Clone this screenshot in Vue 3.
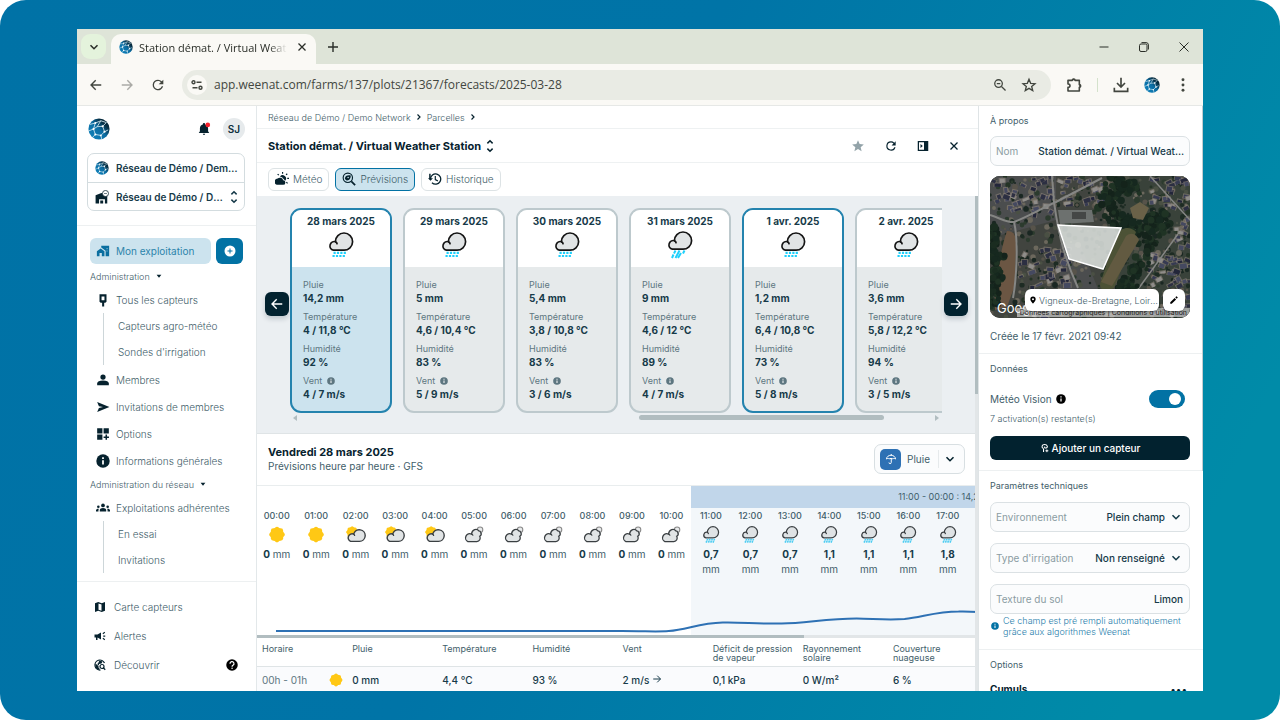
<template>
    <div class="backdrop">
        <!-- shared icon shapes -->
        <svg class="sprite" aria-hidden="true">
            <defs>
                <linearGradient id="globe-fill" x1="0" y1="1" x2="1" y2="0">
                    <stop offset="0" stop-color="#0f86c0" />
                    <stop offset="0.5" stop-color="#0b6da3" />
                    <stop offset="0.75" stop-color="#052c40" />
                    <stop offset="1" stop-color="#03202e" />
                </linearGradient>
            </defs>
            <symbol id="globe" viewBox="0 0 24 24">
                <circle cx="12" cy="12" r="11.5" fill="url(#globe-fill)" />
                <g fill="none" stroke="#d5ebf4" stroke-width="0.9">
                    <path d="M2 7 8 5.5 14 3 20 5M8 5.5 6 12 10 9.5 14 3M10 9.5 16 9 20 5M16 9 18 15 22 13M6 12 8 18 14 19 18 15M6 12 1 14M8 18 5 21M14 19 15 23" />
                </g>
                <g fill="#fff">
                    <circle cx="8" cy="5.5" r="1.1" />
                    <circle cx="6" cy="12" r="1.2" />
                    <circle cx="16" cy="9" r="1.2" />
                    <circle cx="18" cy="15" r="1.2" />
                    <circle cx="8" cy="18" r="1.1" />
                    <circle cx="14" cy="19" r="1" />
                </g>
            </symbol>
            <symbol id="chevron" viewBox="0 0 16 16">
                <path d="m4 6 4 4 4-4" fill="none" stroke="currentColor" stroke-width="1.8" />
            </symbol>
            <symbol id="chevron-right" viewBox="0 0 16 16">
                <path d="m5 3 5 5-5 5" fill="none" stroke="currentColor" stroke-width="2.4" />
            </symbol>
            <symbol id="sorter" viewBox="3 0 10 16">
                <path d="m5 5 3-3 3 3M5 11l3 3 3-3" fill="none" stroke="currentColor" stroke-width="1.7" />
            </symbol>
            <symbol id="caret" viewBox="0 0 10 10">
                <path d="M1 3h8L5 8z" fill="currentColor" />
            </symbol>
            <symbol id="arrow-left" viewBox="0 0 24 24">
                <path d="M21 12H4m7.5-8L3.5 12l8 8" fill="none" stroke="currentColor" stroke-width="2.4" />
            </symbol>
            <symbol id="arrow-right" viewBox="0 0 24 24">
                <path d="M3 12h17m-7.5-8 8 8-8 8" fill="none" stroke="currentColor" stroke-width="2.4" />
            </symbol>
            <symbol id="reload" viewBox="0 0 24 24">
                <path d="M17.65 6.35A7.96 7.96 0 0 0 12 4a8 8 0 1 0 7.73 10h-2.08A6 6 0 1 1 12 6c1.66 0 3.14.69 4.22 1.78L13 11h7V4z" fill="currentColor" />
            </symbol>
            <symbol id="cross" viewBox="0 0 24 24">
                <path d="m5 5 14 14M19 5 5 19" fill="none" stroke="currentColor" stroke-width="2.6" />
            </symbol>
            <symbol id="star-line" viewBox="0 0 24 24">
                <path d="m12 3.500 2.500 6 6.500.5-5 4.200 1.600 6.300L12 17.100l-5.600 3.400L8 14.200 3 10l6.500-.5z" fill="none" stroke="currentColor" stroke-width="2" />
            </symbol>
            <symbol id="star" viewBox="0 0 24 24">
                <path d="M12 17.270 18.180 21l-1.640-7.030L22 9.240l-7.190-.61L12 2 9.190 8.630 2 9.240l5.460 4.730L5.820 21z" fill="currentColor" />
            </symbol>
            <symbol id="zoom-out" viewBox="0 0 24 24">
                <g fill="none" stroke="currentColor" stroke-width="2.2">
                    <circle cx="9.5" cy="9.5" r="6.5" />
                    <path d="m14.5 14.5 7 7M6.5 9.5h6" />
                </g>
            </symbol>
            <symbol id="puzzle" viewBox="0 0 24 24">
                <path d="M3 5h6.500a2 2 0 0 1 4 0H20v6.500a2 2 0 0 1 0 4V21H3v-5.500c4 0 4-5 0-5z" fill="none" stroke="currentColor" stroke-width="2.4" stroke-linejoin="round" />
                <path d="M9.500 5a2.200 2.200 0 0 1 4.400 0zM20 11a2.200 2.200 0 0 1 0 4.400z" fill="currentColor" />
            </symbol>
            <symbol id="download" viewBox="0 0 24 24">
                <path d="M12 1v14m-6-6 6 6 6-6M2 16v5.500h20V16" fill="none" stroke="currentColor" stroke-width="2.5" />
            </symbol>
            <symbol id="dots-v" viewBox="0 0 24 24">
                <g fill="currentColor">
                    <circle cx="12" cy="4" r="2.2" />
                    <circle cx="12" cy="12" r="2.2" />
                    <circle cx="12" cy="20" r="2.2" />
                </g>
            </symbol>
            <symbol id="tune" viewBox="0 0 24 24">
                <g fill="none" stroke="currentColor" stroke-width="2.8">
                    <circle cx="5" cy="6.5" r="3" />
                    <path d="M11 6.500h10M3 17.500h10" />
                    <circle cx="19" cy="17.5" r="3" />
                </g>
            </symbol>
            <symbol id="bell" viewBox="0 0 24 24">
                <path d="M12 22a2 2 0 0 0 2-2h-4a2 2 0 0 0 2 2zm7-6v-5.500c0-3.100-2-5.600-5-6.300V3.500a2 2 0 0 0-4 0v.7c-3 .7-5 3.200-5 6.300V16l-2 3h18z" fill="#06222e" />
                <circle cx="18.5" cy="5" r="4" fill="#f5222d" />
            </symbol>
            <symbol id="barn" viewBox="0 0 24 24">
                <path d="M1 23V9l10-4 10 4v14h-4v-7H7v7zM9 18h5v5H9z" fill="#06222e" />
                <circle cx="18" cy="6" r="5.2" fill="#fff" stroke="#06222e" stroke-width="1.3" />
                <path d="M15.500 6h5" stroke="#06222e" />
            </symbol>
            <symbol id="home-work" viewBox="0 0 24 24">
                <path d="M1.500 12.500 8 7.500l6.500 5V21H10v-5.500H6V21H1.500z" fill="currentColor" />
                <path d="M9 3h13.500v18H16.500v-9.500L9 5.800z" fill="currentColor" />
                <path d="M18 7h2v2h-2zM18 11h2v2h-2z" fill="#7fb5d0" />
            </symbol>
            <symbol id="plus-circle" viewBox="0 0 24 24">
                <path d="M12 1a11 11 0 1 0 0 22 11 11 0 0 0 0-22zm5 12h-4v4h-2v-4H7v-2h4V7h2v4h4z" fill="currentColor" />
            </symbol>
            <symbol id="sensor" viewBox="0 0 24 24">
                <path d="M6 2h12v13l-2 1.500h-2V23h-3.500v-6.500H8L6 15zm3.500 4v6.500h5V6z" fill="currentColor" fill-rule="evenodd" />
            </symbol>
            <symbol id="person" viewBox="0 0 24 24">
                <circle cx="12" cy="7" r="4.5" fill="currentColor" />
                <path d="M2 21v-3c0-3 4-5 10-5s10 2 10 5v3z" fill="currentColor" />
            </symbol>
            <symbol id="send" viewBox="0 0 24 24">
                <path d="M2 3.500 23 12 2 20.500l3-7 7-1.500-7-1.500z" fill="currentColor" />
            </symbol>
            <symbol id="widgets" viewBox="0 0 24 24">
                <path d="M2 2h9v9H2zm11 0h9v9h-9zM2 13h9v9H2zm14.300 0h2.600v3.200h3.300v2.600h-3.300V22h-2.600v-3.200H13v-2.600h3.300z" fill="currentColor" />
            </symbol>
            <symbol id="info" viewBox="0 0 24 24">
                <circle cx="12" cy="12" r="11.5" fill="currentColor" />
                <path d="M10.500 10.500h3V18h-3zM10.500 5.500h3v3h-3z" fill="#fff" />
            </symbol>
            <symbol id="groups" viewBox="0 0 24 24">
                <g fill="currentColor">
                    <circle cx="12" cy="7.5" r="3.2" />
                    <circle cx="4" cy="10" r="2.2" />
                    <circle cx="20" cy="10" r="2.2" />
                    <path d="M6.500 18v-2.500c0-2 2.500-3.500 5.500-3.500s5.500 1.500 5.500 3.500V18zM0 18v-2c0-1.800 2-3 5-2.800-.5.700-.8 1.500-.8 2.300V18zM24 18v-2c0-1.800-2-3-5-2.800.5.700.8 1.500.8 2.300V18z" />
                </g>
            </symbol>
            <symbol id="map" viewBox="0 0 24 24">
                <path d="M2 4.500 8.500 2l7 2.500L22 2v17.500L15.500 22l-7-2.500L2 22zM9 5v12.500l6 2V7z" fill="currentColor" fill-rule="evenodd" />
            </symbol>
            <symbol id="megaphone" viewBox="0 0 24 24">
                <path d="M1 9h6l7-4v14l-7-4v5H4v-5H1zM18.500 11h4v2.500h-4zM17 6.500l4-3 1.300 1.800-4 3zM18.300 15.700l4 3-1.300 1.800-4-3z" fill="currentColor" />
            </symbol>
            <symbol id="discover" viewBox="0 0 24 24">
                <path d="M21 8A10 10 0 1 0 13 22" fill="none" stroke="currentColor" stroke-width="2.4" />
                <path d="M3 9l6 5v3l2 2v3C5 22 2 16 3 9zM11 3l6 2-2 4-5 1v3l-4-3 2-1z" fill="currentColor" />
                <circle cx="16" cy="15" r="4" fill="#fff" stroke="currentColor" stroke-width="2.4" />
                <path d="m18.500 17.500 4 4" stroke="currentColor" stroke-width="2.6" />
            </symbol>
            <symbol id="help" viewBox="0 0 24 24">
                <circle cx="12" cy="12" r="11.5" fill="#000" />
                <path d="M8 9.500a4 4 0 1 1 6 3.200c-1.300.8-1.900 1.300-1.900 2.800" fill="none" stroke="#fff" stroke-width="2.4" />
                <circle cx="12.1" cy="18.5" r="1.5" fill="#fff" />
            </symbol>
            <symbol id="sun-cloud" viewBox="0 0 24 24">
                <path d="M3 22h10.500a4 4 0 0 0 .5-8 6 6 0 0 0-9.500-3A5.700 5.700 0 0 0 3 22z" fill="currentColor" />
                <path d="M8.500 7.500a5 5 0 1 1 9 7.500 6.500 6.500 0 0 0-2.500-2.500A8 8 0 0 0 8.500 7.500z" fill="currentColor" />
                <path d="M13 0v3M21 3l-2 2M24 11h-3M21.500 19.500l-2-2M4.500 3.500l2 2" stroke="currentColor" stroke-width="2" />
            </symbol>
            <symbol id="forecast" viewBox="0 0 24 24">
                <circle cx="10" cy="10" r="8" fill="none" stroke="currentColor" stroke-width="2" />
                <path d="m16 16 6.500 6.500" stroke="currentColor" stroke-width="3" />
                <path d="M5 12c0-6 5-7 10-6 0 5-2 9-7 8.500L5 12z" fill="currentColor" />
                <circle cx="10.5" cy="9.5" r="1.3" fill="#cce3ee" />
            </symbol>
            <symbol id="history" viewBox="0 0 24 24">
                <path d="M4.200 12a8.800 8.800 0 1 1 2.600 6.300" fill="none" stroke="currentColor" stroke-width="2.2" />
                <path d="M0 10.500h8.500L4.300 15zM2 3h2.500v8H2z" fill="currentColor" />
                <path d="M12.500 7v6l4.500 2.500" fill="none" stroke="currentColor" stroke-width="2" />
            </symbol>
            <symbol id="side-panel" viewBox="0 0 24 24">
                <path d="M1.500 2h21v20h-21zM4 4.500v15h10v-15zM7 8l4.500 4L7 16z" fill="currentColor" fill-rule="evenodd" />
            </symbol>
            <symbol id="umbrella" viewBox="0 0 24 24">
                <path d="M3 12a9 7.500 0 0 1 18 0c-2-1.500-4-1.500-5 0-1.500-1.500-6.500-1.500-8 0-1-1.500-3-1.500-5 0zM12.500 2v2.500M12.500 11v8a2.300 2.300 0 0 1-4.600 0" fill="none" stroke="currentColor" stroke-width="2" />
            </symbol>
            <symbol id="pin" viewBox="0 0 24 24">
                <path d="M12 1.500a8 8 0 0 0-8 8C4 15 12 22.500 12 22.500S20 15 20 9.500a8 8 0 0 0-8-8zm0 5a3 3 0 1 1 0 6 3 3 0 0 1 0-6z" fill="currentColor" />
            </symbol>
            <symbol id="pencil" viewBox="0 0 24 24">
                <path d="M3 17.500V21h3.500L17 10.500 13.500 7zM20.700 6.800a1 1 0 0 0 0-1.400l-2-2a1 1 0 0 0-1.500 0L15 5.500 18.500 9z" fill="currentColor" />
            </symbol>
            <symbol id="probe" viewBox="0 0 24 24">
                <path d="M8 13C3 11 4 3.500 11 3.500s9 7.500 3.500 8.500c-3 .5-4-1.500-3.500-3.500M8.500 13v8.500" fill="none" stroke="currentColor" stroke-width="2.6" />
                <path d="M16.500 15.500v6.500M13 18.700h7" stroke="currentColor" stroke-width="2.4" />
            </symbol>
            <symbol id="rain" viewBox="0 0 26 26">
                <path d="M5.300 18.200h10.500A8.600 8.600 0 1 0 7.400 9.700a4.300 4.300 0 0 0-2.100 8.500z" fill="#e1e4e5" stroke="currentColor" stroke-width="1.7" />
                <path d="M7.200 9.600c1.300.4 1.900 1.300 2 2.800" fill="none" stroke="currentColor" stroke-width="1.7" />
                <path d="M5.500 20.900h13" stroke="#1fd0fb" stroke-width="2.2" stroke-dasharray="2.2 1.2" />
                <path d="M4.500 24h12.500" stroke="#1fd0fb" stroke-width="2.2" stroke-dasharray="2.2 1.2" />
            </symbol>
            <symbol id="rain-soft" viewBox="0 0 26 26">
                <path d="M5.300 18.200h10.500A8.600 8.600 0 1 0 7.400 9.700a4.300 4.300 0 0 0-2.100 8.500z" fill="#dfe3e5" stroke="currentColor" stroke-width="1.9" />
                <path d="M7.200 9.600c1.300.4 1.900 1.300 2 2.800" fill="none" stroke="currentColor" stroke-width="1.7" />
                <path d="m8 19.500-2.500 6m6-6-2.500 6m6-6-2.500 6m6-6-2.500 6" stroke="#4fcdf2" stroke-width="2.4" stroke-dasharray="2.8 0.8" />
            </symbol>
            <symbol id="showers" viewBox="0 0 26 28">
                <path d="M5.300 18.200h10.500A8.600 8.600 0 1 0 7.400 9.700a4.300 4.300 0 0 0-2.100 8.500z" fill="#e1e4e5" stroke="currentColor" stroke-width="1.7" />
                <path d="M7.200 9.600c1.300.4 1.900 1.300 2 2.800" fill="none" stroke="currentColor" stroke-width="1.7" />
                <path d="m8.500 19.500-1.500 3m5.500-3L8.500 27M6.500 23.500 5 27m12.500-7.500-1.500 3m-2-.5-3 5" stroke="#1fd0fb" stroke-width="2" />
            </symbol>
            <symbol id="sun" viewBox="0 0 24 24">
                <g fill="#ffc815">
                    <rect x="3.3" y="3.3" width="17.4" height="17.4" rx="3.5" />
                    <rect x="3.3" y="3.3" width="17.4" height="17.4" rx="3.5" transform="rotate(45 12 12)" />
                </g>
            </symbol>
            <symbol id="partly" viewBox="0 2 26 22">
                <g fill="#ffc815">
                    <rect x="2" y="4" width="12" height="12" rx="2" />
                    <rect x="2" y="4" width="12" height="12" rx="2" transform="rotate(45 8 10)" />
                </g>
                <path d="M6 22h11.500a7.600 7.600 0 1 0-7.500-9.500A4.900 4.900 0 1 0 6 22z" fill="#e1e4e5" stroke="currentColor" stroke-width="1.8" />
                <path d="M9.500 12.500c1.200.3 1.800 1.200 1.800 2.300" fill="none" stroke="currentColor" stroke-width="1.6" />
            </symbol>
            <symbol id="cloudy" viewBox="0 2 28 23">
                <circle cx="22.5" cy="6.8" r="3.8" fill="#e8eaeb" stroke="#888" stroke-width="1.5" />
                <path d="M5.500 23.500H18a5 5 0 0 0 4-7.500c2-1 2.500-3.500 1.500-5.500-.5-1.200-1.500-1.800-2.800-2-2.500-3.800-9.500-2.500-10.200 4.500a5.300 5.300 0 0 0-5 10.500z" fill="#e1e4e5" stroke="currentColor" stroke-width="1.8" />
                <path d="M10.500 13c1.200.2 2 1 2 2.200" fill="none" stroke="currentColor" stroke-width="1.6" />
            </symbol>
        </svg>

        <div class="window">
            <div class="tab-strip">
                <button class="tab-search" aria-label="Rechercher des onglets">
                    <svg class="i14"><use href="#chevron" /></svg>
                </button>
                <div class="browser-tab">
                    <svg class="i14"><use href="#globe" /></svg>
                    <span class="tab-title">Station démat. / Virtual Weather Station</span>
                    <button aria-label="Fermer l'onglet"><svg class="i12"><use href="#cross" /></svg></button>
                </div>
                <button class="new-tab" aria-label="Nouvel onglet">
                    <svg class="i10" viewBox="0 0 10 10"><path d="M5 0v10M0 5h10" stroke="currentColor" stroke-width="1.4" /></svg>
                </button>
                <div class="window-controls">
                    <button aria-label="Réduire"><svg class="i10" viewBox="0 0 10 10"><path d="M.5 5h9" stroke="currentColor" /></svg></button>
                    <button aria-label="Restaurer">
                        <svg class="i10" viewBox="0 0 10 10" fill="none" stroke="currentColor">
                            <rect x=".5" y="2" width="7.5" height="7.5" rx="1.5" />
                            <path d="M2.500.6H7A2.400 2.400 0 0 1 9.400 3v4.500" />
                        </svg>
                    </button>
                    <button aria-label="Fermer"><svg class="i10" viewBox="0 0 10 10"><path d="m.5.5 9 9m0-9-9 9" stroke="currentColor" /></svg></button>
                </div>
            </div>

            <div class="toolbar">
                <button class="tool" aria-label="Retour"><svg class="i14"><use href="#arrow-left" /></svg></button>
                <button class="tool faded" aria-label="Avancer"><svg class="i14"><use href="#arrow-right" /></svg></button>
                <button class="tool" aria-label="Actualiser"><svg class="i16"><use href="#reload" /></svg></button>
                <div class="address">
                    <span class="site-info"><svg class="i12"><use href="#tune" /></svg></span>
                    <input v-model="address" type="text" aria-label="Adresse" />
                    <button aria-label="Zoom"><svg class="i14"><use href="#zoom-out" /></svg></button>
                    <button aria-label="Favori"><svg class="i16"><use href="#star-line" /></svg></button>
                </div>
                <button aria-label="Extensions"><svg class="i16"><use href="#puzzle" /></svg></button>
                <span class="tool-sep"></span>
                <button aria-label="Téléchargements"><svg class="i16"><use href="#download" /></svg></button>
                <button aria-label="Profil"><svg class="i16"><use href="#globe" /></svg></button>
                <button aria-label="Menu"><svg class="i16"><use href="#dots-v" /></svg></button>
            </div>

            <div class="app">
                <aside class="sidebar">
                    <div class="side-top">
                        <div class="brand-row">
                            <svg class="i22"><use href="#globe" /></svg>
                            <button class="bell" aria-label="Notifications"><svg class="i14"><use href="#bell" /></svg></button>
                            <span class="avatar">SJ</span>
                        </div>
                        <div class="farm-picker">
                            <button>
                                <svg class="i14"><use href="#globe" /></svg>
                                <span>Réseau de Démo / Demo Network</span>
                            </button>
                            <button>
                                <svg class="i14"><use href="#barn" /></svg>
                                <span>Réseau de Démo / Demo Network</span>
                                <svg class="sort-icon"><use href="#sorter" /></svg>
                            </button>
                        </div>
                    </div>

                    <nav class="side-nav">
                        <div class="farm-row">
                            <a class="farm-link" href="#"><svg class="i14"><use href="#home-work" /></svg>Mon exploitation</a>
                            <button class="farm-add" aria-label="Ajouter"><svg class="i12"><use href="#plus-circle" /></svg></button>
                        </div>
                        <template v-for="group in navGroups" :key="group.label">
                            <button class="group-label">{{ group.label }}<svg class="i6"><use href="#caret" /></svg></button>
                            <template v-for="item in group.items" :key="item.label">
                                <a class="nav-item" href="#">
                                    <svg class="i14"><use :href="'#' + item.icon" /></svg>{{ item.label }}
                                </a>
                                <div v-if="item.children" class="sub-nav">
                                    <a v-for="child in item.children" :key="child" href="#">{{ child }}</a>
                                </div>
                            </template>
                        </template>
                    </nav>

                    <div class="side-bottom">
                        <a href="#"><svg class="i12"><use href="#map" /></svg>Carte capteurs</a>
                        <a href="#"><svg class="i12"><use href="#megaphone" /></svg>Alertes</a>
                        <a href="#"><svg class="i12"><use href="#discover" /></svg>Découvrir<svg class="i12 help"><use href="#help" /></svg></a>
                    </div>
                </aside>

                <main class="content">
                    <div class="breadcrumb">
                        <a href="#">Réseau de Démo / Demo Network</a>
                        <svg class="i8"><use href="#chevron-right" /></svg>
                        <a href="#">Parcelles</a>
                        <svg class="i8"><use href="#chevron-right" /></svg>
                    </div>
                    <div class="title-row">
                        <h1>Station démat. / Virtual Weather Station</h1>
                        <svg class="sort-icon"><use href="#sorter" /></svg>
                        <div class="title-actions">
                            <button class="muted" aria-label="Favori"><svg class="i14"><use href="#star" /></svg></button>
                            <button aria-label="Actualiser"><svg class="i14"><use href="#reload" /></svg></button>
                            <button aria-label="Panneau"><svg class="i12"><use href="#side-panel" /></svg></button>
                            <button aria-label="Fermer"><svg class="i12"><use href="#cross" /></svg></button>
                        </div>
                    </div>
                    <div class="view-tabs">
                        <button v-for="tab in tabs"
                                :key="tab.label"
                                :class="{ active: tab.label === activeTab }"
                                @click="activeTab = tab.label">
                            <svg class="i14"><use :href="'#' + tab.icon" /></svg>{{ tab.label }}
                        </button>
                    </div>

                    <section class="scroll-body">
                        <div class="carousel">
                            <button class="slide-btn" aria-label="Précédent"><svg class="i14"><use href="#arrow-left" /></svg></button>
                            <div class="carousel-view">
                                <div class="cards">
                                    <article v-for="(day, i) in days"
                                             :key="day.date"
                                             class="day-card"
                                             :class="{ selected: i === selectedDay, outlined: day.outlined }"
                                             @click="selectedDay = i">
                                        <header>
                                            <h2>{{ day.date }}</h2>
                                            <svg class="day-icon"><use :href="'#' + day.icon" /></svg>
                                        </header>
                                        <dl>
                                            <dt>Pluie</dt>
                                            <dd>{{ day.rain }} mm</dd>
                                            <dt>Température</dt>
                                            <dd>{{ day.temp }} °C</dd>
                                            <dt>Humidité</dt>
                                            <dd>{{ day.humidity }} %</dd>
                                            <dt>Vent <svg class="i8"><use href="#info" /></svg></dt>
                                            <dd>{{ day.wind }} m/s</dd>
                                        </dl>
                                    </article>
                                </div>
                                <div class="h-scroll">
                                    <span class="arrow-l"></span>
                                    <span class="thumb"></span>
                                    <span class="arrow-r"></span>
                                </div>
                            </div>
                            <button class="slide-btn next" aria-label="Suivant"><svg class="i14"><use href="#arrow-right" /></svg></button>
                        </div>

                        <div class="day-head">
                            <div>
                                <h2>Vendredi 28 mars 2025</h2>
                                <p>Prévisions heure par heure · GFS</p>
                            </div>
                            <button class="metric">
                                <span class="metric-icon"><svg class="i12"><use href="#umbrella" /></svg></span>
                                Pluie
                                <span class="metric-arrow"><svg class="i14"><use href="#chevron" /></svg></span>
                            </button>
                        </div>

                        <div class="hours-view">
                            <div class="hours">
                                <div class="rain-band">11:00 - 00:00 : 14,2 mm</div>
                                <div class="hour-grid">
                                    <div v-for="hour in hours" :key="hour.time" class="hour">
                                        <span class="hour-time">{{ hour.time }}</span>
                                        <svg class="hour-icon"><use :href="'#' + hour.icon" /></svg>
                                        <span class="hour-value"><b>{{ hour.value }}</b> mm</span>
                                    </div>
                                </div>
                                <svg class="curve" viewBox="0 0 948 30" preserveAspectRatio="none">
                                    <path d="M19 26H365C390 26 400 27 412 26C430 25 442 18 466 17.500C485 17 500 19 525 18.500C550 18 570 13.500 600 13.500C615 13.500 630 15.500 648 14C666 12 680 6.500 702 6.500C720 6 740 8 760 10C790 13 820 16 850 18C880 20 910 22 930 22" />
                                </svg>
                            </div>
                            <div class="hours-scroll"><span></span></div>
                        </div>

                        <table class="hour-table">
                            <thead>
                                <tr>
                                    <th v-for="col in columns" :key="col">{{ col }}</th>
                                </tr>
                            </thead>
                            <tbody>
                                <tr>
                                    <td class="slot"><div>00h - 01h<svg class="i14"><use href="#sun" /></svg></div></td>
                                    <td>0 mm</td>
                                    <td>4,4 °C</td>
                                    <td>93 %</td>
                                    <td>2 m/s <svg class="i10"><use href="#arrow-right" /></svg></td>
                                    <td>0,1 kPa</td>
                                    <td>0 W/m²</td>
                                    <td>6 %</td>
                                </tr>
                            </tbody>
                        </table>
                        <div class="v-scroll"><span></span></div>
                    </section>
                </main>

                <aside class="details">
                    <section class="about">
                        <h3>À propos</h3>
                        <label class="field">
                            <span>Nom</span>
                            <input v-model="stationName" type="text" />
                        </label>
                        <div class="map">
                            <svg class="map-image" viewBox="0 0 200 142" preserveAspectRatio="xMidYMid slice">
                                <rect width="200" height="142" fill="#41443f" />
                                <path d="M0 0h66v44L0 62zM70 68h20l20 50H70z" fill="#4b4d4e" />
                                <path d="M120 0h80v142h-50l-20-40z" fill="#39423a" />
                                <circle v-for="(t, i) in trees" :key="'t' + i" :cx="t.x" :cy="t.y" :r="t.r" :fill="t.color" />
                                <path d="M17 55c8 0 9 6 9 14l-1 40-8 22-12 3c-1-20 5-60 12-79z" fill="#6b5643" />
                                <path d="M68 34h34l2 12-34 2z" fill="#6d716f" />
                                <path d="M82 36h14v7H82z" fill="#454746" />
                                <g v-for="(h, i) in houses" :key="'h' + i" :transform="`translate(${h.x} ${h.y}) rotate(${h.a})`">
                                    <rect x="-1" y="-1" :width="h.w + 2" :height="h.h + 1" fill="#8d8479" opacity="0.6" />
                                    <rect :width="h.w" :height="h.h" :fill="h.color" />
                                </g>
                                <g fill="none" stroke="#858684" stroke-width="2">
                                    <path d="M0 39c12 4 18 8 24 7C40 40 56 30 66 26L112 2M62 0l2 26c3 20 6 46 24 86M24 46c5 20 2 60-1 76" />
                                    <path d="M188 58 146 116M160 0l40 44" stroke-width="1.5" />
                                </g>
                                <circle v-for="(w, i) in woods" :key="'w' + i" :cx="w.x" :cy="w.y" :r="w.r" :fill="w.color" />
                                <path d="M126 60c6-10 14-10 20-4L124 112c-8 6-14 2-14-4z" fill="#4c5236" />
                                <path d="M136 60c6-5 11-1 13 4l-27 46-11-4z" fill="#625a41" />
                                <path d="m140 32 10-6 9 6-6 12-10-2z" fill="#6a6148" />
                                <path class="plot" d="m68 49 63 3-18 41-34-10z" />
                            </svg>
                            <span class="map-logo">Google</span>
                            <span class="map-terms">Données cartographiques | Conditions d'utilisation</span>
                            <div class="map-tools">
                                <span class="place"><svg class="i8"><use href="#pin" /></svg><span>Vigneux-de-Bretagne, Loire-Atlantique</span></span>
                                <button aria-label="Modifier"><svg class="i10"><use href="#pencil" /></svg></button>
                            </div>
                        </div>
                        <p class="created">Créée le 17 févr. 2021 09:42</p>
                    </section>

                    <section class="data">
                        <h3>Données</h3>
                        <label class="switch-row">
                            <span>Météo Vision <svg class="i10"><use href="#info" /></svg></span>
                            <input v-model="vision" type="checkbox" />
                        </label>
                        <p class="remaining">7 activation(s) restante(s)</p>
                        <button class="primary"><svg class="i10"><use href="#probe" /></svg>Ajouter un capteur</button>
                    </section>

                    <section class="params">
                        <h3>Paramètres techniques</h3>
                        <label class="field">
                            <span>Environnement</span>
                            <select><option>Plein champ</option></select>
                            <svg class="i14"><use href="#chevron" /></svg>
                        </label>
                        <label class="field">
                            <span>Type d'irrigation</span>
                            <select><option>Non renseigné</option></select>
                            <svg class="i14"><use href="#chevron" /></svg>
                        </label>
                        <label class="field">
                            <span>Texture du sol</span>
                            <input v-model="soil" type="text" />
                        </label>
                        <p class="hint">
                            <svg class="i8"><use href="#info" /></svg>
                            <span>Ce champ est pré rempli automatiquement grâce aux algorithmes Weenat</span>
                        </p>
                    </section>

                    <section class="options">
                        <h3>Options</h3>
                        <div class="option-row"><strong>Cumuls</strong><button aria-label="Plus">•••</button></div>
                    </section>
                    <span class="details-scroll"></span>
                </aside>
            </div>
        </div>
    </div>
</template>

<script setup>
    import { ref } from 'vue';

    const address = ref('app.weenat.com/farms/137/plots/21367/forecasts/2025-03-28');
    const stationName = ref('Station démat. / Virtual Weather Station');
    const soil = ref('Limon');
    const vision = ref(true);
    const activeTab = ref('Prévisions');
    const selectedDay = ref(0);

    const navGroups = [
        {
            label: 'Administration',
            items: [
                { label: 'Tous les capteurs', icon: 'sensor', children: ['Capteurs agro-météo', "Sondes d'irrigation"] },
                { label: 'Membres', icon: 'person' },
                { label: 'Invitations de membres', icon: 'send' },
                { label: 'Options', icon: 'widgets' },
                { label: 'Informations générales', icon: 'info' }
            ]
        },
        {
            label: 'Administration du réseau',
            items: [
                { label: 'Exploitations adhérentes', icon: 'groups', children: ['En essai', 'Invitations'] }
            ]
        }
    ];

    const tabs = [
        { label: 'Météo', icon: 'sun-cloud' },
        { label: 'Prévisions', icon: 'forecast' },
        { label: 'Historique', icon: 'history' }
    ];

    const days = [
        { date: '28 mars 2025', icon: 'rain', rain: '14,2', temp: '4 / 11,8', humidity: 92, wind: '4 / 7' },
        { date: '29 mars 2025', icon: 'rain', rain: '5', temp: '4,6 / 10,4', humidity: 83, wind: '5 / 9' },
        { date: '30 mars 2025', icon: 'rain', rain: '5,4', temp: '3,8 / 10,8', humidity: 83, wind: '3 / 6' },
        { date: '31 mars 2025', icon: 'showers', rain: '9', temp: '4,6 / 12', humidity: 89, wind: '4 / 7' },
        { date: '1 avr. 2025', icon: 'rain', rain: '1,2', temp: '6,4 / 10,8', humidity: 73, wind: '5 / 8', outlined: true },
        { date: '2 avr. 2025', icon: 'rain', rain: '3,6', temp: '5,8 / 12,2', humidity: 94, wind: '3 / 5' }
    ];

    const rainByHour = ['0', '0', '0', '0', '0', '0', '0', '0', '0', '0', '0', '0,7', '0,7', '0,7', '1,1', '1,1', '1,1', '1,8'];

    function hourIcon(h) {
        if (h < 2) return 'sun';
        if (h < 5) return 'partly';
        if (h < 11) return 'cloudy';
        return 'rain-soft';
    }

    const hours = rainByHour.map((value, h) => ({
        time: `${String(h).padStart(2, '0')}:00`,
        icon: hourIcon(h),
        value
    }));

    const columns = ['Horaire', 'Pluie', 'Température', 'Humidité', 'Vent', 'Déficit de pression de vapeur', 'Rayonnement solaire', 'Couverture nuageuse'];

    // Small seeded generator so the aerial view is always the same
    let seed = 7;
    function rand() {
        seed = (seed * 16807) % 2147483647;
        return seed / 2147483647;
    }

    function pick(list) {
        return list[Math.floor(rand() * list.length)];
    }

    const treeColors = ['#1d2b23', '#243326', '#2c3b2e', '#4a5044', '#57534a', '#1a2722', '#6c685d'];
    const trees = Array.from({ length: 700 }, () => ({
        x: Math.round(rand() * 200),
        y: Math.round(rand() * 142),
        r: 1 + rand() * 2,
        color: pick(treeColors)
    }));

    const roofColors = ['#2c2f42', '#363a52', '#23263a', '#454960', '#8f8d8a'];
    const houses = [];
    while (houses.length < 210) {
        const x = rand() * 198;
        const y = rand() * 138;
        const west = x < 62 && (y < 38 || (x > 28 && y > 72));
        const north = x > 68 && x < 112 && y < 30;
        const lots = x > 30 && x < 76 && y > 70 && y < 122;
        const east = x > 158 && (y < 34 || x + y > 232);
        if (west || north || lots || east) {
            houses.push({
                x,
                y,
                w: 3 + rand() * 4,
                h: 2 + rand() * 3,
                a: Math.round(rand() * 60 - 30),
                color: pick(roofColors)
            });
        }
    }

    // Tree belts: [x1, y1, x2, y2, half width]
    const belts = [
        [116, 34, 128, 8, 9],
        [128, 8, 146, 12, 7],
        [120, 40, 142, 54, 9],
        [142, 54, 176, 40, 8],
        [170, 44, 150, 88, 10],
        [150, 88, 128, 120, 8],
        [2, 50, 8, 100, 5],
        [10, 80, 4, 130, 5]
    ];
    const woodColors = ['#14231b', '#1a2c20', '#1f3324', '#16281f'];
    const woods = belts.flatMap(([x1, y1, x2, y2, half]) =>
        Array.from({ length: 44 }, () => {
            const t = rand();
            return {
                x: x1 + (x2 - x1) * t + (rand() - 0.5) * half * 2,
                y: y1 + (y2 - y1) * t + (rand() - 0.5) * half * 2,
                r: 2 + rand() * 2,
                color: pick(woodColors)
            };
        })
    );
</script>

<style>
    body {
        margin: 0;
        background: #fff;
    }
</style>

<style scoped>
    * {
        box-sizing: border-box;
    }

    .backdrop {
        display: flex;
        height: 100vh;
        padding: 29px 77px;
        border-radius: 26px;
        background: linear-gradient(115deg, #0072a6 0%, #0074a7 45%, #008ba8 90%);
        font-family: Inter, "Liberation Sans", sans-serif;
        font-size: 11px;
        color: #3f5e6a;
    }

    .sprite {
        position: absolute;
        width: 0;
        height: 0;
    }

    svg {
        flex: none;
    }

    button, input, select {
        margin: 0;
        padding: 0;
        border: 0;
        background: none;
        font: inherit;
        color: inherit;
    }

    button {
        display: flex;
        align-items: center;
        cursor: pointer;
    }

    a {
        color: inherit;
        text-decoration: none;
    }

    h1, h2, h3, p, dl, dd {
        margin: 0;
    }

    .i6 { width: 6px; height: 6px; }
    .i8 { width: 8px; height: 8px; }
    .i10 { width: 10px; height: 10px; }
    .i12 { width: 12px; height: 12px; }
    .i14 { width: 14px; height: 14px; }
    .i16 { width: 16px; height: 16px; }
    .i22 { width: 22px; height: 22px; }

    .sort-icon {
        width: 10px;
        height: 14px;
    }

    .window {
        flex: 1;
        min-width: 0;
        display: flex;
        flex-direction: column;
        overflow: hidden;
        background: #fff;
    }

    /* Browser chrome */
    .tab-strip {
        display: flex;
        align-items: flex-start;
        height: 35px;
        padding: 5px 14px 0 4px;
        background: #dee4d8;
        color: #2a2e28;
    }

    .tab-search {
        justify-content: center;
        width: 25px;
        height: 25px;
        margin-right: 5px;
        border-radius: 9px;
        background: #e4f3dc;
    }

    .browser-tab {
        display: flex;
        align-items: center;
        gap: 6px;
        width: 205px;
        height: 30px;
        padding: 0 8px 4px 8px;
        border-radius: 10px 10px 0 0;
        background: #faf9f5;
        font-family: "Open Sans", "Noto Sans", sans-serif;
        font-size: 11px;
    }

    .tab-title {
        flex: 1;
        overflow: hidden;
        white-space: nowrap;
        -webkit-mask-image: linear-gradient(to right, #000 88%, transparent);
        mask-image: linear-gradient(to right, #000 88%, transparent);
    }

    .browser-tab button {
        margin-left: 3px;
    }

    .new-tab {
        height: 26px;
        margin-left: 12px;
    }

    .window-controls {
        display: flex;
        gap: 30px;
        height: 26px;
        margin-left: auto;
    }

    .toolbar {
        display: flex;
        align-items: center;
        gap: 15px;
        height: 41px;
        padding: 0 12px 0 10px;
        background: #faf9f5;
        color: #42463f;
    }

    .tool {
        justify-content: center;
        width: 18px;
        margin-right: -2px;
    }

    .faded {
        color: #aaaaa6;
    }

    .address {
        flex: 1;
        display: flex;
        align-items: center;
        gap: 14px;
        height: 30px;
        margin-left: 2px;
        padding: 0 14px 0 5px;
        border-radius: 15px;
        background: #e9ebe4;
    }

    .address input {
        flex: 1;
        min-width: 0;
        margin-left: -7px;
        font-family: "Open Sans", "Noto Sans", sans-serif;
        font-size: 12px;
    }

    .site-info {
        display: flex;
        align-items: center;
        justify-content: center;
        width: 20px;
        height: 20px;
        border-radius: 10px;
        background: #faf9f5;
    }

    .tool-sep {
        width: 1px;
        height: 14px;
        background: #d4e2cc;
    }

    .app {
        flex: 1;
        display: flex;
        min-height: 0;
        border-top: 1px solid #e6e8e6;
    }

    /* Sidebar */
    .sidebar {
        flex: 0 0 180px;
        display: flex;
        flex-direction: column;
        min-width: 0;
        min-height: 0;
        border-right: 1px solid #e3e8ea;
    }

    .side-top {
        padding: 12px 11px 14px 10px;
        border-bottom: 1px solid #edf0f1;
    }

    .brand-row {
        display: flex;
        align-items: center;
        padding-left: 1px;
    }

    .bell {
        margin-left: auto;
    }

    .avatar {
        width: 22px;
        margin-left: 12px;
        border-radius: 11px;
        background: #e6eaec;
        line-height: 22px;
        text-align: center;
        font-weight: 600;
        font-size: 10px;
        color: #0b2f3d;
    }

    .farm-picker {
        margin-top: 13px;
        border: 1px solid #d3dcdf;
        border-radius: 7px;
    }

    .farm-picker button {
        width: 100%;
        height: 28px;
        gap: 7px;
        padding: 0 5px 0 7px;
        text-align: left;
        font-weight: 600;
        font-size: 10px;
        color: #163a49;
    }

    .farm-picker button + button {
        border-top: 1px solid #d3dcdf;
    }

    .farm-picker span {
        flex: 1;
        overflow: hidden;
        white-space: nowrap;
        text-overflow: ellipsis;
    }

    .farm-picker .sort-icon {
        margin-left: -3px;
    }

    .side-nav {
        flex: 1;
        min-height: 0;
        overflow: hidden;
        padding: 12px 13px 0;
        font-size: 10px;
        font-weight: 300;
    }

    .farm-row {
        display: flex;
        gap: 5px;
        margin-bottom: 2px;
    }

    .farm-link {
        flex: 1;
        display: flex;
        align-items: center;
        gap: 6px;
        height: 26px;
        padding-left: 6px;
        border-radius: 6px;
        background: #cce3ee;
        font-weight: 400;
        color: #2c83ab;
    }

    .farm-link svg {
        color: #0b6fa0;
    }

    .farm-add {
        justify-content: center;
        width: 27px;
        border-radius: 6px;
        background: #0272a4;
        color: #fff;
    }

    .group-label {
        gap: 6px;
        height: 20px;
        font-size: 9px;
    }

    .group-label svg {
        color: #06222e;
    }

    .nav-item {
        display: flex;
        align-items: center;
        gap: 6px;
        height: 27px;
        padding-left: 6px;
    }

    .nav-item svg {
        color: #06222e;
    }

    .sub-nav {
        margin: 0 0 1px 13px;
        border-left: 1px solid #cdd6d9;
    }

    .sub-nav a {
        display: block;
        padding-left: 14px;
        line-height: 26px;
    }

    .side-bottom {
        padding: 10px 18px 12px 17px;
        border-top: 1px solid #edf0f1;
        font-size: 10px;
        font-weight: 300;
    }

    .side-bottom a {
        display: flex;
        align-items: center;
        gap: 8px;
        height: 29px;
    }

    .side-bottom svg {
        color: #06222e;
    }

    .side-bottom .help {
        margin-left: auto;
    }

    /* Main column */
    .content {
        flex: 1;
        display: flex;
        flex-direction: column;
        min-width: 0;
    }

    .breadcrumb {
        display: flex;
        align-items: center;
        gap: 4px;
        height: 23px;
        padding-left: 11px;
        border-bottom: 1px solid #eef1f2;
        font-size: 9px;
        font-weight: 300;
    }

    .breadcrumb svg {
        color: #06222e;
    }

    .title-row {
        display: flex;
        align-items: center;
        gap: 4px;
        height: 34px;
        padding: 0 18px 0 11px;
        border-bottom: 1px solid #eef1f2;
        color: #06222e;
    }

    .title-row h1 {
        font-size: 11px;
        font-weight: 700;
    }

    .title-actions {
        display: flex;
        gap: 19px;
        margin-left: auto;
    }

    .muted {
        color: #93a3a9;
    }

    .view-tabs {
        display: flex;
        align-items: center;
        gap: 6px;
        height: 33px;
        padding: 0 0 1px 11px;
        font-size: 10px;
        font-weight: 300;
    }

    .view-tabs button {
        gap: 4px;
        height: 23px;
        padding: 0 6px;
        border: 1px solid #dde3e5;
        border-radius: 6px;
    }

    .view-tabs svg {
        color: #06222e;
    }

    .view-tabs .active {
        border-color: #0272a4;
        background: #cce3ee;
    }

    .scroll-body {
        position: relative;
        flex: 1;
        min-height: 0;
        overflow: hidden;
    }

    .v-scroll {
        position: absolute;
        top: 0;
        right: 0;
        bottom: 0;
        width: 3px;
        background: #e2e6e8;
    }

    .v-scroll span {
        display: block;
        height: 40%;
        background: #b1bdc0;
    }

    .carousel {
        display: flex;
        align-items: flex-start;
        padding: 12px 10px 12px 8px;
        border-bottom: 1px solid #dfe4e6;
        background: #ebeff2;
    }

    .slide-btn {
        flex: none;
        justify-content: center;
        width: 24px;
        height: 24px;
        margin: 84px 1px 0 0;
        border-radius: 6px;
        background: #02222f;
        color: #fff;
        box-shadow: 0 3px 5px rgba(0, 30, 45, 0.18);
    }

    .slide-btn.next {
        margin: 84px 0 0 2px;
    }

    .carousel-view {
        flex: 1;
        min-width: 0;
        overflow: hidden;
    }

    .cards {
        display: flex;
        gap: 11px;
    }

    .day-card {
        flex: 0 0 102px;
        overflow: hidden;
        border: 2px solid #bdc9cd;
        border-radius: 11px;
        background: #e6eaeb;
        cursor: pointer;
    }

    .day-card header {
        display: flex;
        flex-direction: column;
        align-items: center;
        height: 57px;
        padding-top: 3px;
        background: #fff;
    }

    .day-card h2 {
        font-size: 10px;
        line-height: 16px;
        font-weight: 700;
        color: #163a49;
    }

    .day-icon {
        width: 26px;
        height: 28px;
        margin-top: 2px;
        color: #151515;
    }

    .day-card dl {
        padding: 12px 0 4px 11px;
    }

    .day-card dt {
        display: flex;
        align-items: center;
        gap: 5px;
        font-size: 9px;
        line-height: 12px;
        color: #5d7680;
    }

    .day-card dd {
        margin-bottom: 6px;
        font-size: 10px;
        line-height: 14px;
        font-weight: 700;
        color: #163a49;
    }

    .selected {
        background: #cce3ee;
    }

    .selected, .outlined {
        border-color: #2483ae;
    }

    .h-scroll {
        display: flex;
        align-items: center;
        height: 7px;
        margin-top: 1px;
        padding: 0 3px;
    }

    .thumb {
        width: 245px;
        height: 5px;
        margin-left: auto;
        margin-right: 51px;
        border-radius: 3px;
        background: #b1bdc0;
    }

    .arrow-l, .arrow-r {
        border: 3px solid transparent;
    }

    .arrow-l {
        border-left: 0;
        border-right: 4px solid #b1bdc0;
    }

    .arrow-r {
        border-right: 0;
        border-left: 4px solid #b1bdc0;
    }

    .day-head {
        display: flex;
        align-items: center;
        justify-content: space-between;
        height: 52px;
        padding: 0 13px 1px 11px;
        border-bottom: 1px solid #e9edee;
        font-size: 10px;
    }

    .day-head h2 {
        font-size: 11px;
        line-height: 14px;
        font-weight: 700;
        color: #06222e;
    }

    .day-head p {
        line-height: 14px;
    }

    .metric {
        gap: 6px;
        height: 30px;
        padding: 0 7px 0 5px;
        border: 1px solid #d8dfe2;
        border-radius: 7px;
        background: #fbfcfd;
    }

    .metric-icon {
        display: flex;
        align-items: center;
        justify-content: center;
        width: 21px;
        height: 21px;
        border-radius: 5px;
        background: #2e71b4;
        color: #fff;
    }

    .metric-arrow {
        display: flex;
        align-items: center;
        height: 18px;
        margin-left: 2px;
        padding-left: 4px;
        border-left: 1px solid #e6eaec;
        color: #06222e;
    }

    .hours-view {
        overflow: hidden;
    }

    .hours {
        width: 131.4%;
        height: 149px;
        display: flex;
        flex-direction: column;
        background: linear-gradient(to right, #fff 45.8%, #f3f7fa 45.8%);
    }

    .rain-band {
        height: 22px;
        margin-left: 45.8%;
        background: #c1d6ea;
        font-size: 9px;
        line-height: 22px;
        text-align: center;
    }

    .hour-grid {
        display: grid;
        grid-template-columns: repeat(24, 1fr);
        padding-top: 1px;
    }

    .hour {
        display: flex;
        flex-direction: column;
        align-items: center;
    }

    .hour-time {
        font-size: 9px;
        line-height: 14px;
        font-weight: 500;
    }

    .hour-icon {
        width: 20px;
        height: 17px;
        margin: 3px 0 4px;
        color: #3a3f42;
    }

    .hour-value {
        padding: 0 5px;
        font-size: 10px;
        line-height: 15px;
        text-align: center;
    }

    .hour-value b {
        font-weight: 700;
        color: #163a49;
    }

    .curve {
        width: 100%;
        height: 30px;
        margin-top: auto;
    }

    .curve path {
        fill: none;
        stroke: #2e71b4;
        stroke-width: 2;
    }

    .hours-scroll {
        height: 3px;
        background: #e2e6e8;
    }

    .hours-scroll span {
        display: block;
        width: 75.8%;
        height: 3px;
        background: #b1bdc0;
    }

    .hour-table {
        width: 100%;
        table-layout: fixed;
        border-collapse: collapse;
        font-size: 10px;
    }

    .hour-table th {
        height: 28px;
        padding: 6px 0 0 5px;
        border-bottom: 1px solid #dfe4e6;
        font-size: 9px;
        line-height: 9px;
        font-weight: 400;
        text-align: left;
        vertical-align: top;
    }

    .hour-table td {
        height: 27px;
        padding: 0 0 0 5px;
        background: #fafbfd;
        font-weight: 500;
        white-space: nowrap;
        color: #163a49;
    }

    .hour-table .slot {
        font-weight: 400;
        color: #5d7680;
    }

    .slot div {
        display: flex;
        align-items: center;
        justify-content: space-between;
        padding-right: 4px;
    }

    /* Details column */
    .details {
        position: relative;
        flex: 0 0 225px;
        min-height: 0;
        overflow: hidden;
        border-left: 1px solid #dfe4e6;
        font-size: 10px;
    }

    .details section {
        padding: 0 13px 0 11px;
        border-bottom: 1px solid #edf0f1;
    }

    .details h3 {
        padding-top: 8px;
        font-size: 9px;
        line-height: 14px;
        font-weight: 400;
    }

    .details-scroll {
        position: absolute;
        top: 0;
        right: 0;
        width: 1px;
        height: 365px;
        background: #c3ccd0;
    }

    .field {
        display: flex;
        align-items: center;
        height: 30px;
        padding: 0 6px 0 5px;
        border: 1px solid #dbe1e4;
        border-radius: 7px;
        background: #fbfcfd;
        color: #8b9ca3;
    }

    .field input, .field select {
        flex: 1;
        min-width: 0;
        font-weight: 500;
        text-align: right;
        text-align-last: right;
        text-overflow: ellipsis;
        appearance: none;
        color: #163a49;
    }

    .field input {
        margin-left: 20px;
    }

    .field select {
        margin-right: 4px;
    }

    .field svg {
        color: #163a49;
    }

    .about .field {
        margin-top: 8px;
        padding-right: 4px;
    }

    .map {
        position: relative;
        height: 142px;
        margin-top: 10px;
        overflow: hidden;
        border-radius: 10px;
        background: #363c3c;
    }

    .map-image {
        display: block;
        width: 100%;
        height: 100%;
    }

    .plot {
        fill: rgba(225, 229, 226, 0.85);
        stroke: #fff;
        stroke-width: 1.5;
    }

    .map-logo {
        position: absolute;
        left: 7px;
        bottom: 3px;
        font-size: 13px;
        line-height: 14px;
        color: #fff;
    }

    .map-terms {
        position: absolute;
        right: 0;
        bottom: 1px;
        padding: 0 3px;
        background: rgba(230, 230, 230, 0.6);
        font-size: 7px;
        line-height: 9px;
        white-space: nowrap;
        color: #222;
    }

    .map-tools {
        position: absolute;
        right: 5px;
        bottom: 7px;
        display: flex;
        gap: 4px;
        font-size: 9px;
        font-weight: 300;
    }

    .place, .map-tools button {
        display: flex;
        align-items: center;
        height: 22px;
        border-radius: 6px;
        background: #fff;
        box-shadow: 0 1px 2px rgba(0, 0, 0, 0.3);
    }

    .place {
        gap: 2px;
        width: 134px;
        padding: 0 1px 0 4px;
    }

    .place span {
        overflow: hidden;
        white-space: nowrap;
        text-overflow: ellipsis;
    }

    .map-tools svg {
        color: #000;
    }

    .map-tools button {
        justify-content: center;
        width: 22px;
    }

    .created {
        padding: 11px 0 10px;
        line-height: 14px;
    }

    .switch-row {
        display: flex;
        align-items: center;
        justify-content: space-between;
        margin-top: 14px;
        padding-right: 5px;
    }

    .switch-row span {
        display: flex;
        align-items: center;
        gap: 4px;
    }

    .switch-row svg {
        color: #000;
    }

    .switch-row input {
        display: flex;
        justify-content: flex-end;
        align-items: center;
        width: 36px;
        height: 18px;
        padding: 0 4px;
        border-radius: 9px;
        background: #0272a4;
        appearance: none;
    }

    .switch-row input::before {
        content: "";
        width: 12px;
        height: 12px;
        border-radius: 6px;
        background: #fff;
    }

    .switch-row input:not(:checked) {
        justify-content: flex-start;
        background: #93a3a9;
    }

    .remaining {
        margin-top: 4px;
        font-size: 9px;
        line-height: 14px;
        font-weight: 300;
    }

    .primary {
        justify-content: center;
        gap: 2px;
        width: 100%;
        height: 24px;
        margin: 10px 0;
        border-radius: 6px;
        background: #02222f;
        font-weight: 500;
        color: #fff;
    }

    .params .field {
        margin-top: 11px;
    }

    .params h3 + .field {
        margin-top: 9px;
    }

    .hint {
        display: flex;
        align-items: center;
        gap: 4px;
        padding: 1px 0 12px 1px;
        font-size: 9px;
        line-height: 11px;
        font-weight: 300;
        color: #1f80ac;
    }

    .hint svg {
        color: #0272a4;
    }

    .option-row {
        display: flex;
        justify-content: space-between;
        margin-top: 11px;
        padding: 0 3px 10px 0;
        color: #06222e;
    }
</style>
